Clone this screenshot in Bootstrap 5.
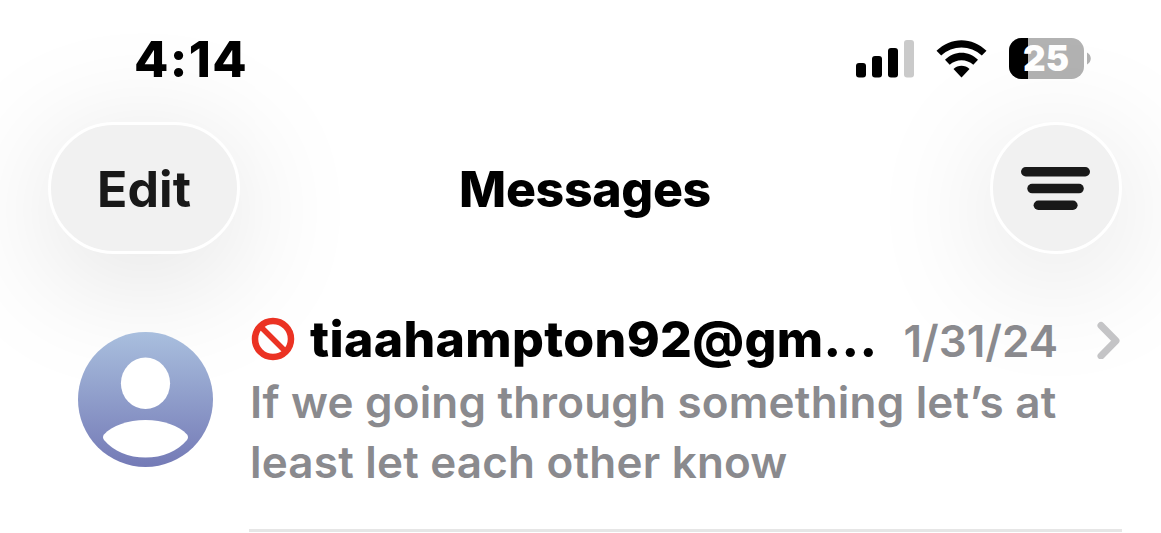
<!DOCTYPE html>
<html lang="en">
<head>
  <meta charset="UTF-8">
  <meta name="viewport" content="width=device-width, initial-scale=1">
  <title>Messages</title>
  <link href="https://cdn.jsdelivr.net/npm/bootstrap@5.3.0/dist/css/bootstrap.min.css" rel="stylesheet">
  <style>
    body {
      font-family: Inter, "Liberation Sans", sans-serif;
      background: #fff;
      color: #000;
      height: 533px;
      overflow: hidden;
    }
    svg { display: block; flex: none; }

    .status-bar { height: 117px; padding: 0 70px 0 134px; }
    .clock { font-size: 50px; line-height: 60px; font-weight: 800; letter-spacing: 1.4px; }
    .signal { margin-right: 21px; }
    .wifi { margin-right: 22px; }

    .top-bar { height: 142px; padding: 0 39px 0 48px; margin-bottom: 47px; }
    .top-title { font-size: 50px; line-height: 60px; font-weight: 800; letter-spacing: -.35px; padding-top: 2px; }
    .top-side { width: 192px; }
    .glass {
      height: 132px;
      padding: 0;
      background: #f1f1f1;
      border: 3px solid #fff;
      border-radius: 66px;
      color: #191919;
      box-shadow: 0 22px 130px rgba(0, 0, 0, .135);
    }
    .glass-edit { width: 192px; font-size: 50px; line-height: 60px; font-weight: 700; letter-spacing: .1px; padding-top: 2px; }
    .glass-filter { width: 132px; }

    .thread { padding: 0 39px 0 78px; }
    .avatar { margin: 26px 36px 0 0; }
    .thread-body { height: 226px; border-bottom: 3px solid #e6e6e6; }
    .thread-head { height: 66px; }
    .sender { font-size: 50px; line-height: 66px; font-weight: 800; letter-spacing: .35px; margin-left: 15px; }
    .sent-date { font-size: 44px; line-height: 66px; font-weight: 600; color: #8a8a8e; margin-left: auto; margin-right: 38px; padding-top: 4px; }
    .preview { font-size: 44px; line-height: 60px; font-weight: 600; color: #8a8a8e; width: 840px; margin: 0 0 0 1px; letter-spacing: .2px; }
  </style>
</head>
<body>

<header>
  <div class="status-bar d-flex align-items-center">
    <div class="clock me-auto">4:14</div>
    <svg class="signal" width="59" height="38" viewBox="0 0 59 38">
      <rect x="0" y="23" width="10" height="14.5" rx="3"/>
      <rect x="16" y="16" width="10" height="21.5" rx="3"/>
      <rect x="32" y="8" width="10" height="29.5" rx="3"/>
      <rect x="48" y="0" width="10" height="37.5" rx="3" fill="#cacaca"/>
    </svg>
    <svg class="wifi" width="51" height="38" viewBox="0 0 51 38">
      <path d="M0.5 10.8C14.5-3.4 36.5-3.4 50.5 10.8L45.8 15.6C34.5 4.9 16.5 4.9 5.2 15.6Z"/>
      <path d="M9 19.8C18.2 10.3 32.8 10.3 42 19.8L37.3 24.8C30.7 18.6 20.3 18.6 13.7 24.8Z"/>
      <path d="M17.5 28.9C22 24.7 29 24.7 33.5 28.9L25.5 37.5Z"/>
    </svg>
    <svg width="82" height="41" viewBox="0 0 82 41">
      <defs>
        <clipPath id="cell"><rect width="75" height="41" rx="12.5"/></clipPath>
      </defs>
      <g clip-path="url(#cell)">
        <rect width="75" height="41" fill="#b2b2b2"/>
        <rect width="19" height="41"/>
      </g>
      <path d="M78 14.5C83 17 83 24 78 26.5Z" fill="#b2b2b2"/>
      <text x="37" y="33" text-anchor="middle" font-size="35" font-weight="900" fill="#fff" textLength="46">25</text>
    </svg>
  </div>

  <div class="top-bar d-flex align-items-center justify-content-between">
    <button type="button" class="btn glass glass-edit">Edit</button>
    <h1 class="top-title mb-0">Messages</h1>
    <div class="top-side d-flex justify-content-end">
      <button type="button" class="btn glass glass-filter d-flex align-items-center justify-content-center" aria-label="Filter">
        <svg width="69" height="43" viewBox="0 0 69 43" fill="#191919">
          <rect x="0" y="0" width="69" height="9.5" rx="4.75"/>
          <rect x="6.3" y="16.8" width="56.5" height="9.5" rx="4.75"/>
          <rect x="12.6" y="33.5" width="44" height="9.5" rx="4.75"/>
        </svg>
      </button>
    </div>
  </div>
</header>

<main class="thread d-flex position-relative">
  <svg class="avatar" width="135" height="135" viewBox="0 0 135 135">
    <defs>
      <linearGradient id="sky" x1="0" y1="0" x2="0" y2="1">
        <stop offset="0" stop-color="#a9bfde"/>
        <stop offset="1" stop-color="#747ab6"/>
      </linearGradient>
    </defs>
    <circle cx="67.5" cy="67.5" r="67.5" fill="url(#sky)"/>
    <ellipse cx="67.5" cy="51.3" rx="24.6" ry="25.7" fill="#fff"/>
    <path d="M26 102.500C34 93.500 50 88 67.500 88S101 93.500 109 102.500Q111 105 109 108C99.500 119.500 84.500 125.500 67.500 125.500S35.500 119.500 26 108Q24 105 26 102.500Z" fill="#fff"/>
  </svg>

  <div class="thread-body flex-grow-1">
    <div class="thread-head d-flex align-items-center">
      <svg width="46" height="44" viewBox="0 0 46 44" fill="none" stroke="#eb3223">
        <circle cx="24" cy="22" r="18" stroke-width="6.500"/>
        <path d="M11 9L37 35" stroke-width="5.500"/>
      </svg>
      <div class="sender text-nowrap">tiaahampton92@gm...</div>
      <div class="sent-date">1/31/24</div>
      <svg width="26" height="40" viewBox="0 0 26 40" fill="none" stroke="#c4c4c6" stroke-width="7" stroke-linecap="round" stroke-linejoin="round">
        <path d="M5 6.500L20 21.800L5 37"/>
      </svg>
    </div>
    <p class="preview">If we going through something let’s at least let each other know</p>
  </div>
</main>

<script src="https://cdn.jsdelivr.net/npm/bootstrap@5.3.0/dist/js/bootstrap.bundle.min.js"></script>
</body>
</html>
